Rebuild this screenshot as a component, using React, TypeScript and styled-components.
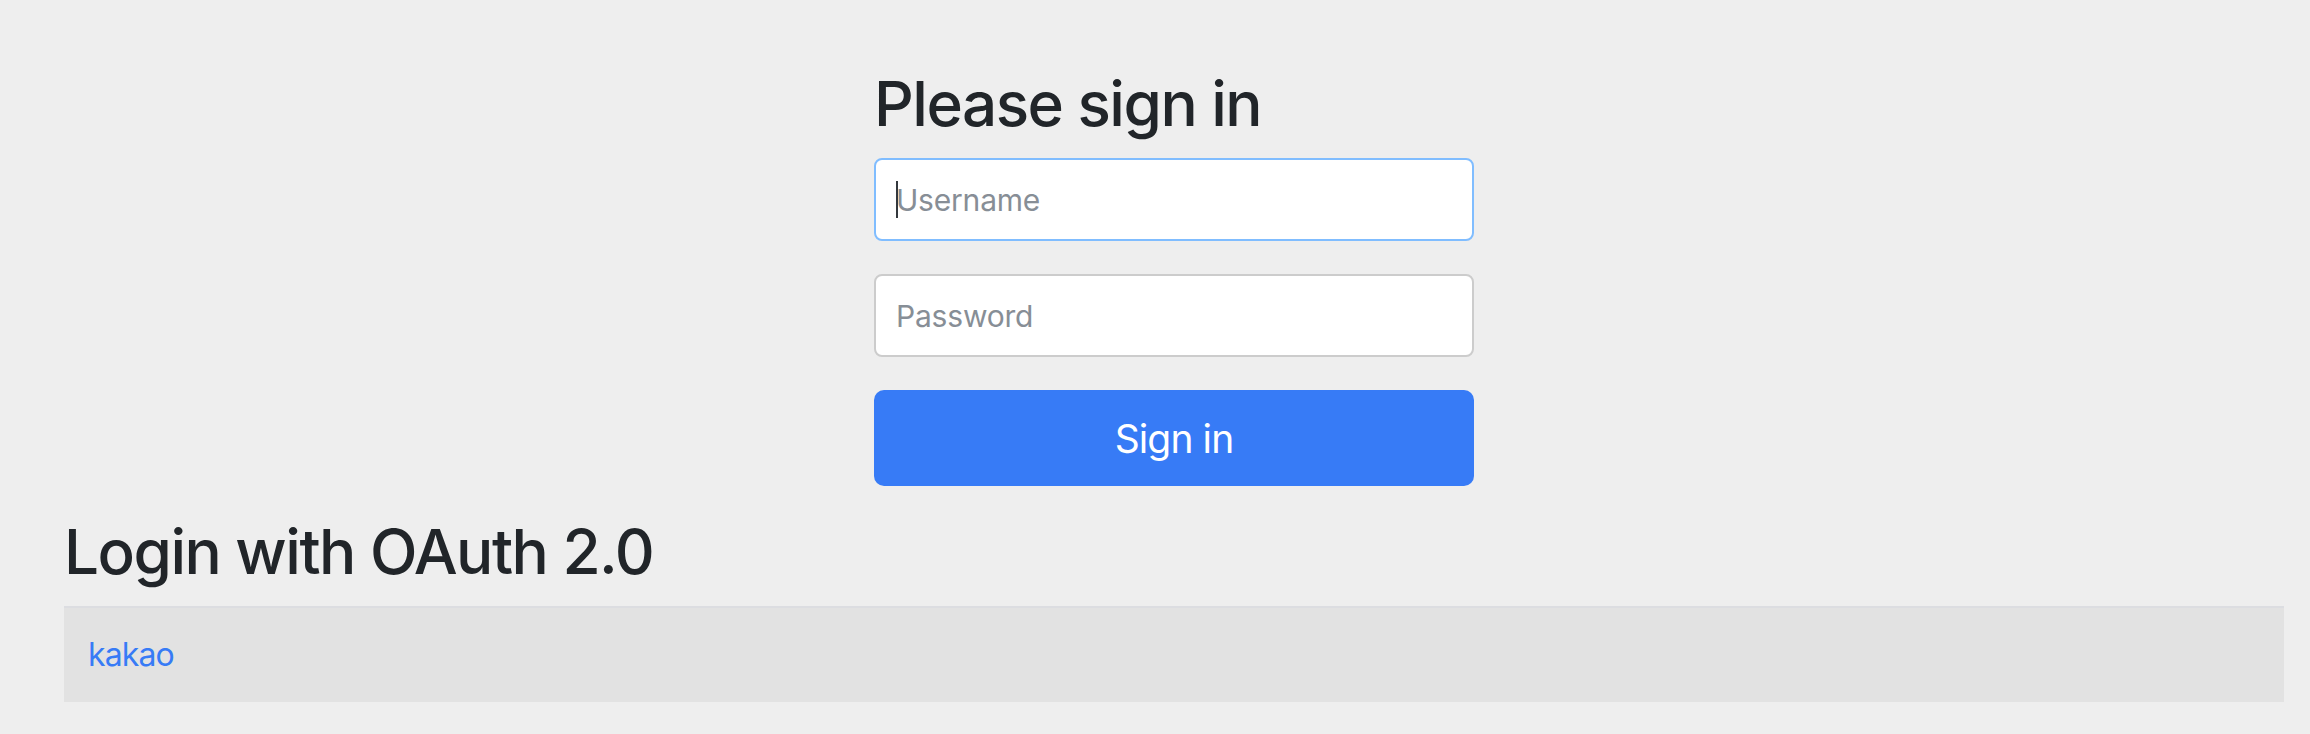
import styled, { createGlobalStyle } from 'styled-components'

const GlobalStyle = createGlobalStyle`
  html, body {
    margin: 0;
    padding: 0;
    background: #eeeeee;
    color: #212529;
    font-family: Inter, "Noto Sans", "Liberation Sans", sans-serif;
    overflow: hidden;
  }
  * {
    box-sizing: border-box;
  }
`

const Page = styled.div`
  padding: 70px 26px 0 64px;
`

const SignInForm = styled.form`
  width: 600px;
  margin: 0 auto;
`

const Heading = styled.h2`
  margin: 0 0 20px 0;
  font-size: 62px;
  font-weight: 500;
  line-height: 1.1;
  letter-spacing: -1.5px;
`

const Field = styled.p`
  position: relative;
  margin: 0 0 33px 0;
`

const Input = styled.input<{ $focused?: boolean }>`
  display: block;
  width: 100%;
  height: 83px;
  padding: 0 20px;
  font-family: inherit;
  font-size: 30px;
  letter-spacing: -0.2px;
  color: #495057;
  background: #ffffff;
  border: 2px solid ${(p) => (p.$focused ? '#80bdff' : '#cccccc')};
  border-radius: 8px;
  outline: none;
  caret-color: transparent;

  &::placeholder {
    color: #878e96;
  }
`

const Caret = styled.span`
  position: absolute;
  left: 22px;
  top: 23px;
  width: 2px;
  height: 37px;
  background: #33383d;
`

const SubmitButton = styled.button`
  display: block;
  width: 100%;
  height: 96px;
  margin: 0;
  padding: 0;
  font-family: inherit;
  font-size: 39px;
  font-weight: 400;
  letter-spacing: -0.9px;
  color: #ffffff;
  background: #377bf6;
  border: none;
  border-radius: 10px;
  cursor: pointer;
`

const OAuthSection = styled.div`
  padding-top: 32px;
`

const OAuthTable = styled.table`
  width: 100%;
  border-collapse: collapse;
`

const Row = styled.tr`
  background: #e2e2e2;
`

const Cell = styled.td`
  padding: 23px 24px;
  border-top: 2px solid #dcdde1;
  font-size: 32px;
  line-height: 48px;
  letter-spacing: -0.9px;
`

const ProviderLink = styled.a`
  color: #377bf6;
  text-decoration: none;
`

export default function App() {
  return (
    <>
      <GlobalStyle />
      <Page>
        <SignInForm onSubmit={(e) => e.preventDefault()}>
          <Heading>Please sign in</Heading>
          <Field>
            <Input $focused type="text" name="username" placeholder="Username" />
            <Caret />
          </Field>
          <Field>
            <Input type="password" name="password" placeholder="Password" />
          </Field>
          <SubmitButton type="submit">Sign in</SubmitButton>
        </SignInForm>
        <OAuthSection>
          <Heading>Login with OAuth 2.0</Heading>
          <OAuthTable>
            <tbody>
              <Row>
                <Cell>
                  <ProviderLink href="#">kakao</ProviderLink>
                </Cell>
              </Row>
            </tbody>
          </OAuthTable>
        </OAuthSection>
      </Page>
    </>
  )
}
